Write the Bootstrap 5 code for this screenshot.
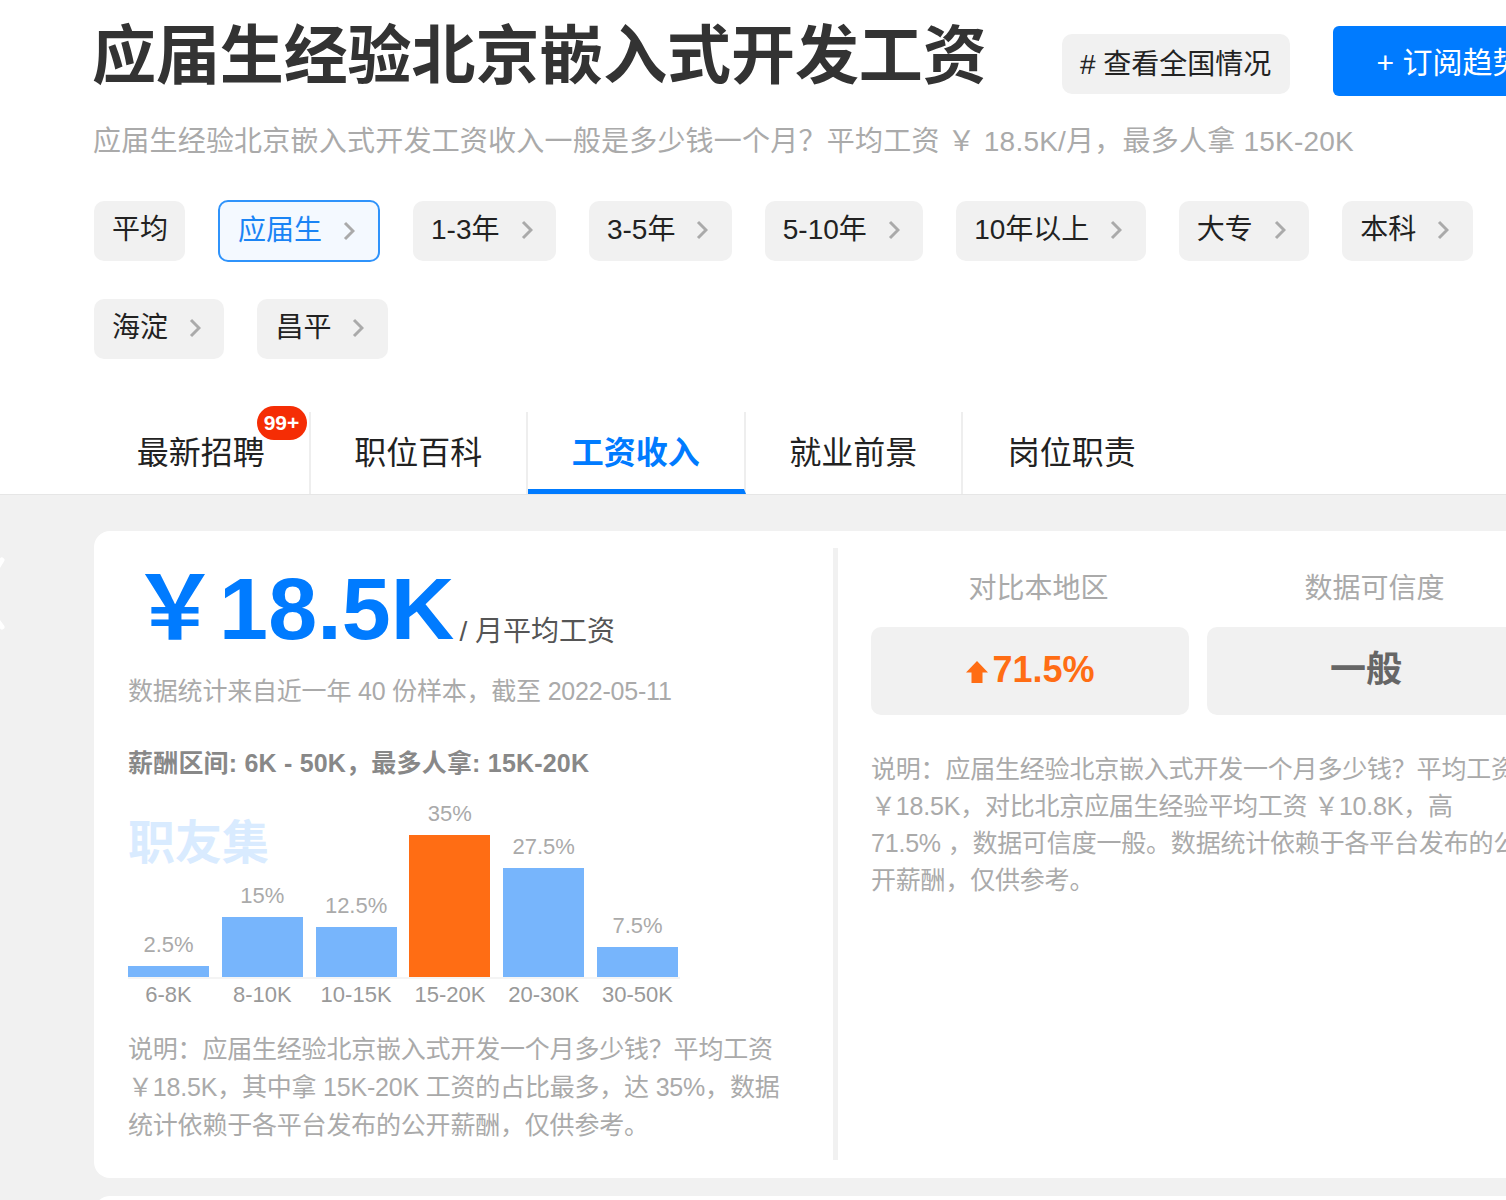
<!DOCTYPE html>
<html lang="zh-CN">
<head>
  <meta charset="UTF-8">
  <title>应届生经验北京嵌入式开发工资</title>
  <meta name="viewport" content="width=device-width, initial-scale=1">
  <link href="https://cdn.jsdelivr.net/npm/bootstrap@5.3.3/dist/css/bootstrap.min.css" rel="stylesheet">
  <style>
    html, body {
      height: 1200px;
      overflow: hidden;
    }
    body {
      width: 1506px;
      background-color: #f1f1f1;
      font-family: "Liberation Sans", "Noto Sans CJK SC", sans-serif;
      color: #222;
    }
    .top-area {
      background: #fff;
      height: 495px;
      padding-left: 94px;
      border-bottom: 1px solid #e6e6e6;
    }
    .title-row {
      height: 112px;
      width: 1600px;
    }
    .page-title {
      font-size: 64px;
      font-weight: 700;
      color: #333;
      margin: 0 0 0 -2px;
      line-height: 112px;
      white-space: nowrap;
      letter-spacing: -.1px;
    }
    .nation-btn {
      margin-left: 75px;
      margin-top: 34px;
      height: 60px;
      width: 228px;
      background: #f1f1f1;
      border-radius: 10px;
      font-size: 28px;
      color: #222;
      text-align: center;
      line-height: 62px;
      white-space: nowrap;
    }
    .sub-btn {
      margin-left: 43px;
      margin-top: 26px;
      height: 70px;
      width: 260px;
      background: #007bff;
      border-radius: 6px;
      font-size: 30px;
      color: #fff;
      line-height: 74px;
      padding-left: 44px;
      white-space: nowrap;
    }
    .sub-line {
      font-size: 28px;
      color: #aaa;
      line-height: 60px;
      margin: 0 0 29px -1px;
      white-space: nowrap;
      letter-spacing: .22px;
    }
    .tag-row {
      column-gap: 33px;
      row-gap: 37px;
      width: 1390px;
    }
    .tag-item {
      height: 60px;
      padding: 0 23.4px 0 18px;
      background: #f1f1f1;
      border-radius: 10px;
      font-size: 28px;
      line-height: 58px;
      color: #222;
      white-space: nowrap;
    }
    .tag-item svg {
      margin-left: 21px;
      margin-top: -3px;
    }
    .tag-plain {
      padding-right: 17px;
    }
    .tag-active {
      background: #f4f9ff;
      border: 2px solid #2f93fb;
      color: #1a84f5;
      padding: 0 23px 0 18px;
      margin-top: -1px;
      height: 62px;
    }
    .tab-row {
      margin: 53px 0 0 -1px;
      height: 83px;
    }
    .tab-item {
      position: relative;
      width: 217.5px;
      height: 82px;
      font-size: 32px;
      line-height: 82px;
      text-align: center;
      color: #222;
      border-right: 2px solid #eee;
    }
    .tab-item:last-child {
      border-right: 0;
    }
    .tab-on {
      color: #007bff;
      font-weight: 700;
      border-bottom: 5px solid #007bff;
    }
    .hot-count {
      position: absolute;
      top: -6px;
      right: 2px;
      width: 50px;
      height: 34px;
      background: #f52d05;
      border-radius: 17px;
      color: #fff;
      font-size: 21px;
      font-weight: 700;
      line-height: 34px;
    }
    .side-mark {
      position: absolute;
      left: 0;
      top: 552px;
    }
    .main-panel {
      margin: 36px 0 0 94px;
      width: 1500px;
      height: 647px;
      background: #fff;
      border-radius: 16px 0 0 16px;
      padding: 17px 0;
    }
    .left-side {
      width: 744px;
      height: 612px;
      padding-left: 34px;
      border-right: 5px solid #f1f1f1;
      position: relative;
    }
    .pay-line {
      height: 110px;
      padding: 12px 0 0 3px;
      white-space: nowrap;
    }
    .pay-num {
      font-size: 88px;
      font-weight: 700;
      color: #007bff;
      line-height: 98px;
      letter-spacing: .1px;
    }
    .pay-unit {
      font-size: 28px;
      color: #555;
      margin-left: 5px;
      position: relative;
      top: 2px;
    }
    .gray-note {
      font-size: 25px;
      color: #aaa;
      line-height: 38px;
      margin: 0;
      width: 660px;
      letter-spacing: -.2px;
    }
    .note-first {
      margin-top: 14px;
    }
    .range-line {
      font-size: 25px;
      font-weight: 700;
      color: #888;
      line-height: 38px;
      margin: 34px 0 0;
      letter-spacing: .2px;
    }
    .chart-box {
      position: relative;
      width: 552px;
      height: 178px;
      margin-top: 19px;
      border-bottom: 2px solid #f4f4f4;
      gap: 12.8px;
    }
    .chart-col {
      width: 81px;
    }
    .chart-pct {
      font-size: 22px;
      color: #aaa;
      line-height: 26px;
      margin-bottom: 8px;
    }
    .chart-bar {
      background: #77b5fc;
    }
    .chart-top {
      background: #ff6d14;
    }
    .water-mark {
      position: absolute;
      left: 0;
      top: 14px;
      font-size: 47px;
      font-weight: 700;
      color: #d9ebff;
      line-height: 56px;
    }
    .axis-row {
      width: 552px;
      gap: 12.8px;
      margin-bottom: 19px;
    }
    .axis-label {
      width: 81px;
      font-size: 22px;
      color: #999;
      line-height: 32px;
      text-align: center;
      white-space: nowrap;
    }
    .right-side {
      padding: 20px 0 0 33px;
      width: 700px;
    }
    .compare-row {
      gap: 18px;
    }
    .compare-col {
      width: 318px;
    }
    .compare-label {
      font-size: 28px;
      color: #aaa;
      line-height: 42px;
      text-align: center;
      padding-left: 17px;
      margin-bottom: 17px;
    }
    .compare-box {
      height: 88px;
      background: #f1f1f1;
      border-radius: 10px;
      font-size: 36px;
      font-weight: 700;
      line-height: 86px;
      text-align: center;
      color: #666;
    }
    .compare-box svg {
      margin-right: 3px;
    }
    .compare-up {
      color: #ff6d14;
    }
    .right-note {
      width: 650px;
      font-size: 25px;
      color: #aaa;
      line-height: 37px;
      margin: 36px 0 0;
      letter-spacing: -.2px;
    }
    .next-panel {
      margin: 18px 0 0 94px;
      height: 20px;
      background: #fff;
      border-radius: 16px 0 0 0;
    }
  </style>
</head>
<body class="position-relative">
  <svg class="side-mark" width="8" height="90" viewBox="0 0 8 90"><path d="M-3 16 L2 8 M-3 68 L2 75" fill="none" stroke="#fff" stroke-width="5" stroke-linecap="round"/></svg>

  <div class="top-area">
    <div class="title-row d-flex">
      <h1 class="page-title">应届生经验北京嵌入式开发工资</h1>
      <div class="nation-btn"># 查看全国情况</div>
      <div class="sub-btn">+ 订阅趋势</div>
    </div>
    <p class="sub-line">应届生经验北京嵌入式开发工资收入一般是多少钱一个月&#xFF1F;平均工资 &#xFFE5; 18.5K/月&#xFF0C;最多人拿 15K-20K</p>

    <div class="tag-row d-flex flex-wrap">
      <div class="tag-item tag-plain">平均</div>
      <div class="tag-item tag-active">应届生<svg width="12" height="20" viewBox="0 0 12 20"><path d="M2 2 L10 10 L2 18" fill="none" stroke="#aaa" stroke-width="3"/></svg></div>
      <div class="tag-item">1-3年<svg width="12" height="20" viewBox="0 0 12 20"><path d="M2 2 L10 10 L2 18" fill="none" stroke="#aaa" stroke-width="3"/></svg></div>
      <div class="tag-item">3-5年<svg width="12" height="20" viewBox="0 0 12 20"><path d="M2 2 L10 10 L2 18" fill="none" stroke="#aaa" stroke-width="3"/></svg></div>
      <div class="tag-item">5-10年<svg width="12" height="20" viewBox="0 0 12 20"><path d="M2 2 L10 10 L2 18" fill="none" stroke="#aaa" stroke-width="3"/></svg></div>
      <div class="tag-item">10年以上<svg width="12" height="20" viewBox="0 0 12 20"><path d="M2 2 L10 10 L2 18" fill="none" stroke="#aaa" stroke-width="3"/></svg></div>
      <div class="tag-item">大专<svg width="12" height="20" viewBox="0 0 12 20"><path d="M2 2 L10 10 L2 18" fill="none" stroke="#aaa" stroke-width="3"/></svg></div>
      <div class="tag-item">本科<svg width="12" height="20" viewBox="0 0 12 20"><path d="M2 2 L10 10 L2 18" fill="none" stroke="#aaa" stroke-width="3"/></svg></div>
      <div class="tag-item">海淀<svg width="12" height="20" viewBox="0 0 12 20"><path d="M2 2 L10 10 L2 18" fill="none" stroke="#aaa" stroke-width="3"/></svg></div>
      <div class="tag-item">昌平<svg width="12" height="20" viewBox="0 0 12 20"><path d="M2 2 L10 10 L2 18" fill="none" stroke="#aaa" stroke-width="3"/></svg></div>
    </div>

    <div class="tab-row d-flex">
      <div class="tab-item">最新招聘<span class="hot-count">99+</span></div>
      <div class="tab-item">职位百科</div>
      <div class="tab-item tab-on">工资收入</div>
      <div class="tab-item">就业前景</div>
      <div class="tab-item">岗位职责</div>
    </div>
  </div>

  <div class="main-panel d-flex">
    <div class="left-side">
      <div class="pay-line"><span class="pay-num">&#xFFE5;18.5K</span><span class="pay-unit">/ 月平均工资</span></div>
      <p class="gray-note note-first">数据统计来自近一年 40 份样本&#xFF0C;截至 2022-05-11</p>
      <p class="range-line">薪酬区间: 6K - 50K&#xFF0C;最多人拿: 15K-20K</p>

      <div class="chart-box d-flex align-items-end">
        <div class="water-mark">职友集</div>
        <div class="chart-col text-center"><div class="chart-pct">2.5%</div><div class="chart-bar" style="height:11px"></div></div>
        <div class="chart-col text-center"><div class="chart-pct">15%</div><div class="chart-bar" style="height:60px"></div></div>
        <div class="chart-col text-center"><div class="chart-pct">12.5%</div><div class="chart-bar" style="height:50px"></div></div>
        <div class="chart-col text-center"><div class="chart-pct">35%</div><div class="chart-bar chart-top" style="height:142px"></div></div>
        <div class="chart-col text-center"><div class="chart-pct">27.5%</div><div class="chart-bar" style="height:109px"></div></div>
        <div class="chart-col text-center"><div class="chart-pct">7.5%</div><div class="chart-bar" style="height:30px"></div></div>
      </div>
      <div class="axis-row d-flex">
        <div class="axis-label">6-8K</div>
        <div class="axis-label">8-10K</div>
        <div class="axis-label">10-15K</div>
        <div class="axis-label">15-20K</div>
        <div class="axis-label">20-30K</div>
        <div class="axis-label">30-50K</div>
      </div>
      <p class="gray-note">说明&#xFF1A;应届生经验北京嵌入式开发一个月多少钱&#xFF1F;平均工资 &#xFFE5;18.5K&#xFF0C;其中拿 15K-20K 工资的占比最多&#xFF0C;达 35%&#xFF0C;数据统计依赖于各平台发布的公开薪酬&#xFF0C;仅供参考。</p>
    </div>

    <div class="right-side">
      <div class="compare-row d-flex">
        <div class="compare-col">
          <div class="compare-label">对比本地区</div>
          <div class="compare-box compare-up"><svg width="24" height="24" viewBox="0 0 24 24"><path d="M12 1 L23 12.5 L17.5 12.5 L17.5 23 L6.5 23 L6.5 12.5 L1 12.5 Z" fill="#ff6d14"/></svg>71.5%</div>
        </div>
        <div class="compare-col">
          <div class="compare-label">数据可信度</div>
          <div class="compare-box">一般</div>
        </div>
      </div>
      <p class="right-note">说明&#xFF1A;应届生经验北京嵌入式开发一个月多少钱&#xFF1F;平均工资 &#xFFE5;18.5K&#xFF0C;对比北京应届生经验平均工资 &#xFFE5;10.8K&#xFF0C;高 71.5% &#xFF0C;数据可信度一般。数据统计依赖于各平台发布的公开薪酬&#xFF0C;仅供参考。</p>
    </div>
  </div>

  <div class="next-panel"></div>

  <script src="https://cdn.jsdelivr.net/npm/bootstrap@5.3.3/dist/js/bootstrap.bundle.min.js"></script>
</body>
</html>
